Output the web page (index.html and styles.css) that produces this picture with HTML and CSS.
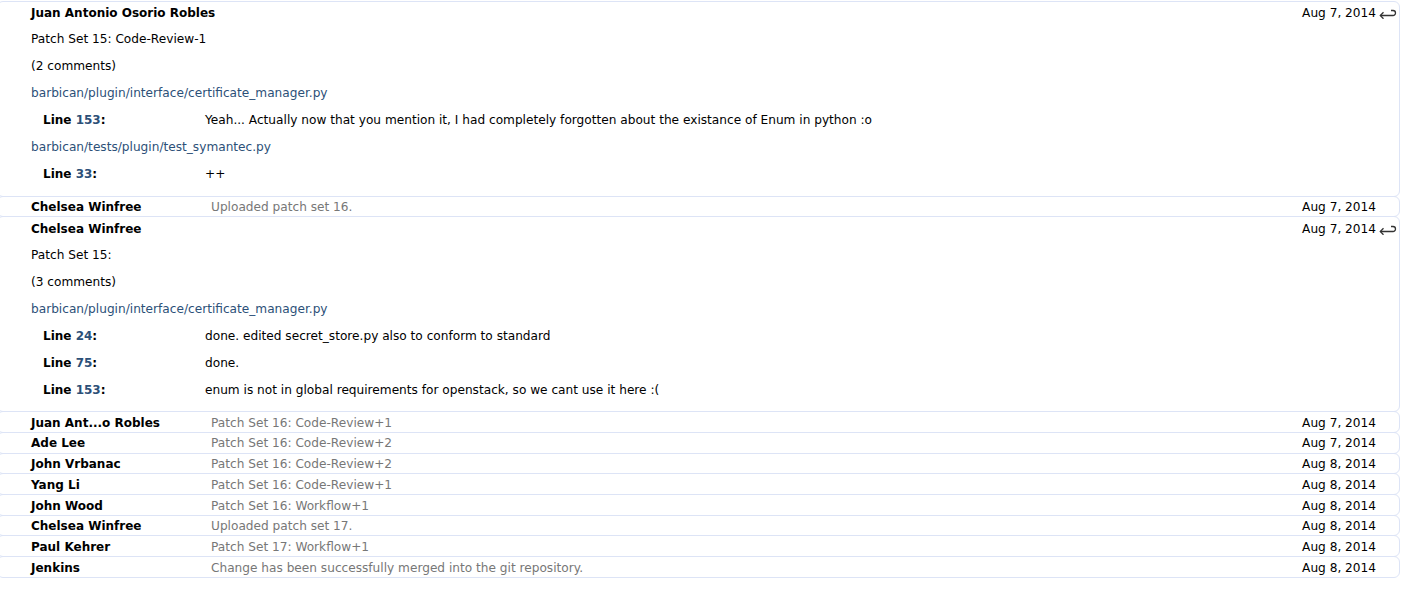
FILE: index.html
```html
<!DOCTYPE html>
<html>
<head>
<meta charset="utf-8">
<link rel="stylesheet" href="styles.css">
</head>
<body>
<div class="messages">

  <div class="msg open">
    <div class="head">
      <span class="author">Juan Antonio Osorio Robles</span>
      <span class="summary"></span>
      <span class="date">Aug 7, 2014</span>
      <span class="reply"><svg viewBox="0 0 18 10" width="18" height="10"><path d="M1.5 6.5 H14 A2.5 2.5 0 0 0 14 1.5 H12" fill="none" stroke="#333" stroke-width="1.3"/><path d="M4.5 3.2 L1.3 6.5 L4.5 9.8" fill="none" stroke="#333" stroke-width="1.3"/></svg></span>
    </div>
    <div class="body">
      <div class="row">Patch Set 15: Code-Review-1</div>
      <div class="row">(2 comments)</div>
      <div class="row"><a class="file" href="#">barbican/plugin/interface/certificate_manager.py</a></div>
      <div class="row comment"><span class="lbl">Line <a href="#">153</a>:</span><span class="txt">Yeah... Actually now that you mention it, I had completely forgotten about the existance of Enum in python :o</span></div>
      <div class="row"><a class="file" href="#">barbican/tests/plugin/test_symantec.py</a></div>
      <div class="row comment"><span class="lbl">Line <a href="#">33</a>:</span><span class="txt">++</span></div>
    </div>
  </div>

  <div class="msg">
    <div class="head">
      <span class="author">Chelsea Winfree</span>
      <span class="summary">Uploaded patch set 16.</span>
      <span class="date">Aug 7, 2014</span>
      <span class="reply"></span>
    </div>
  </div>

  <div class="msg open">
    <div class="head">
      <span class="author">Chelsea Winfree</span>
      <span class="summary"></span>
      <span class="date">Aug 7, 2014</span>
      <span class="reply"><svg viewBox="0 0 18 10" width="18" height="10"><path d="M1.5 6.5 H14 A2.5 2.5 0 0 0 14 1.5 H12" fill="none" stroke="#333" stroke-width="1.3"/><path d="M4.5 3.2 L1.3 6.5 L4.5 9.8" fill="none" stroke="#333" stroke-width="1.3"/></svg></span>
    </div>
    <div class="body">
      <div class="row">Patch Set 15:</div>
      <div class="row">(3 comments)</div>
      <div class="row"><a class="file" href="#">barbican/plugin/interface/certificate_manager.py</a></div>
      <div class="row comment"><span class="lbl">Line <a href="#">24</a>:</span><span class="txt">done. edited secret_store.py also to conform to standard</span></div>
      <div class="row comment"><span class="lbl">Line <a href="#">75</a>:</span><span class="txt">done.</span></div>
      <div class="row comment"><span class="lbl">Line <a href="#">153</a>:</span><span class="txt">enum is not in global requirements for openstack, so we cant use it here :(</span></div>
    </div>
  </div>

  <div class="msg">
    <div class="head"><span class="author">Juan Ant...o Robles</span><span class="summary">Patch Set 16: Code-Review+1</span><span class="date">Aug 7, 2014</span><span class="reply"></span></div>
  </div>
  <div class="msg">
    <div class="head"><span class="author">Ade Lee</span><span class="summary">Patch Set 16: Code-Review+2</span><span class="date">Aug 7, 2014</span><span class="reply"></span></div>
  </div>
  <div class="msg">
    <div class="head"><span class="author">John Vrbanac</span><span class="summary">Patch Set 16: Code-Review+2</span><span class="date">Aug 8, 2014</span><span class="reply"></span></div>
  </div>
  <div class="msg">
    <div class="head"><span class="author">Yang Li</span><span class="summary">Patch Set 16: Code-Review+1</span><span class="date">Aug 8, 2014</span><span class="reply"></span></div>
  </div>
  <div class="msg">
    <div class="head"><span class="author">John Wood</span><span class="summary">Patch Set 16: Workflow+1</span><span class="date">Aug 8, 2014</span><span class="reply"></span></div>
  </div>
  <div class="msg">
    <div class="head"><span class="author">Chelsea Winfree</span><span class="summary">Uploaded patch set 17.</span><span class="date">Aug 8, 2014</span><span class="reply"></span></div>
  </div>
  <div class="msg">
    <div class="head"><span class="author">Paul Kehrer</span><span class="summary">Patch Set 17: Workflow+1</span><span class="date">Aug 8, 2014</span><span class="reply"></span></div>
  </div>
  <div class="msg">
    <div class="head"><span class="author">Jenkins</span><span class="summary">Change has been successfully merged into the git repository.</span><span class="date">Aug 8, 2014</span><span class="reply"></span></div>
  </div>

</div>
</body>
</html>
```

FILE: styles.css
```css
html, body {
  margin: 0;
  padding: 0;
  background: #ffffff;
}

body {
  font-family: "DejaVu Sans", sans-serif;
  font-size: 12.15px;
  color: #000;
}

.messages {
  margin-left: -3px;
  width: 1403px;
  padding-top: 1px;
}

.msg {
  border: 1px solid #dde4f6;
  border-radius: 6px;
  margin-top: -1px;
  box-sizing: border-box;
}

.msg:first-child {
  margin-top: 0;
}

.head {
  display: flex;
  align-items: center;
  line-height: 14px;
  padding: 3.5px 0 2.2px 33px;
}

.msg.open .head {
  padding: 4.3px 0 0 33px;
}

.author {
  width: 180px;
  flex: none;
  font-size: 12px;
  font-weight: bold;
  white-space: nowrap;
}

.summary {
  flex: 1;
  color: #777;
  white-space: nowrap;
}

.date {
  flex: none;
  text-align: right;
}

.reply {
  flex: none;
  width: 23px;
  height: 14px;
  display: flex;
  align-items: center;
  justify-content: flex-start;
  padding-left: 3px;
  box-sizing: border-box;
}

.reply svg {
  display: block;
  margin-top: 2px;
}

.body {
  padding: 6.2px 0 7.3px 33px;
}

.row {
  line-height: 27px;
  height: 27px;
  white-space: nowrap;
}

a {
  color: #2c5078;
  text-decoration: none;
}

.comment {
  display: flex;
  padding-left: 12px;
}

.lbl {
  width: 162px;
  flex: none;
  font-size: 12px;
  font-weight: bold;
}

.txt {
  flex: 1;
}
```
